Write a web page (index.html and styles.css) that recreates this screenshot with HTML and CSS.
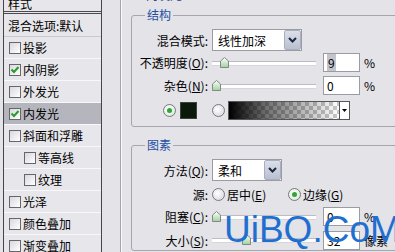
FILE: index.html
```html
<!DOCTYPE html>
<html lang="zh-CN">
<head>
  <meta charset="UTF-8">
  <meta name="viewport" content="width=device-width, initial-scale=1.0">
  <title>图层样式 - 内发光</title>
  <link rel="stylesheet" href="styles.css">
</head>
<body>

  <div class="dialog">
    <!-- 左侧样式列表 -->
    <div class="style-list">
      <div class="list-head">样式</div>
      <div class="list-item blend">混合选项:默认</div>
      <div class="list-item"><span class="check"></span>投影</div>
      <div class="list-item"><span class="check on"><svg width="10" height="10" viewBox="0 0 10 10"><path d="M1.5 4.5L4 7L8.5 2" fill="none" stroke="#249b2a" stroke-width="2"/></svg></span>内阴影</div>
      <div class="list-item"><span class="check"></span>外发光</div>
      <div class="list-item selected"><span class="check on"><svg width="10" height="10" viewBox="0 0 10 10"><path d="M1.5 4.5L4 7L8.5 2" fill="none" stroke="#249b2a" stroke-width="2"/></svg></span>内发光</div>
      <div class="list-item"><span class="check"></span>斜面和浮雕</div>
      <div class="list-item sub"><span class="check"></span>等高线</div>
      <div class="list-item sub"><span class="check"></span>纹理</div>
      <div class="list-item"><span class="check"></span>光泽</div>
      <div class="list-item"><span class="check"></span>颜色叠加</div>
      <div class="list-item"><span class="check"></span>渐变叠加</div>
    </div>

    <!-- 右侧设置 -->
    <div class="panel">
      <div class="panel-title">内发光</div>

      <fieldset class="group">
        <legend>结构</legend>
        <div class="group-body body-structure">
          <div class="row row-mode">
            <span class="row-label">混合模式:</span>
            <div class="select select-mode">
              <span class="select-text">线性加深</span>
              <span class="select-btn"><svg width="9" height="6" viewBox="0 0 9 6"><path d="M1 1L4.5 4.5L8 1" fill="none" stroke="#1c2740" stroke-width="2"/></svg></span>
            </div>
          </div>
          <div class="row row-opacity">
            <span class="row-label">不透明度(<u>O</u>):</span>
            <div class="slider">
              <svg class="thumb" style="left: 8px" width="9" height="11" viewBox="0 0 9 11"><defs><linearGradient id="tg" x1="0" y1="0" x2="0" y2="1"><stop offset="0" stop-color="#ffffff"/><stop offset="1" stop-color="#9fd29a"/></linearGradient></defs><path d="M0.5 4L4.5 0.5L8.5 4V10.5H0.5Z" fill="url(#tg)" stroke="#85858c"/></svg>
            </div>
            <span class="num"><span class="num-sel">9</span></span>
            <span class="unit">%</span>
          </div>
          <div class="row row-noise">
            <span class="row-label">杂色(<u>N</u>):</span>
            <div class="slider">
              <svg class="thumb" style="left: 0px" width="9" height="11" viewBox="0 0 9 11"><path d="M0.5 4L4.5 0.5L8.5 4V10.5H0.5Z" fill="url(#tg)" stroke="#85858c"/></svg>
            </div>
            <span class="num">0</span>
            <span class="unit">%</span>
          </div>
          <div class="row row-color">
            <span class="radio on"></span>
            <span class="swatch"></span>
            <span class="radio radio-grad"></span>
            <div class="gradient-box">
              <span class="gradient-fill"></span>
              <span class="gradient-btn"><svg width="5" height="3" viewBox="0 0 5 3"><path d="M0 0H5L2.5 3Z" fill="#000"/></svg></span>
            </div>
          </div>
        </div>
      </fieldset>

      <fieldset class="group group-elements">
        <legend>图素</legend>
        <div class="group-body body-elements">
          <div class="row row-method">
            <span class="row-label">方法(<u>Q</u>):</span>
            <div class="select select-method">
              <span class="select-text">柔和</span>
              <span class="select-btn"><svg width="9" height="6" viewBox="0 0 9 6"><path d="M1 1L4.5 4.5L8 1" fill="none" stroke="#1c2740" stroke-width="2"/></svg></span>
            </div>
          </div>
          <div class="row row-source">
            <span class="row-label">源:</span>
            <span class="option option-center"><span class="radio"></span>居中(<u>E</u>)</span>
            <span class="option"><span class="radio on"></span>边缘(<u>G</u>)</span>
          </div>
          <div class="row row-choke">
            <span class="row-label">阻塞(<u>C</u>):</span>
            <div class="slider">
              <svg class="thumb" style="left: 0px" width="9" height="11" viewBox="0 0 9 11"><path d="M0.5 4L4.5 0.5L8.5 4V10.5H0.5Z" fill="url(#tg)" stroke="#85858c"/></svg>
            </div>
            <span class="num">0</span>
            <span class="unit">%</span>
          </div>
          <div class="row row-size">
            <span class="row-label">大小(<u>S</u>):</span>
            <div class="slider">
              <svg class="thumb" style="left: 30px" width="9" height="11" viewBox="0 0 9 11"><path d="M0.5 4L4.5 0.5L8.5 4V10.5H0.5Z" fill="url(#tg)" stroke="#85858c"/></svg>
            </div>
            <span class="num">32</span>
            <span class="unit">像素</span>
          </div>
        </div>
      </fieldset>
    </div>

    <div class="watermark">UiBQ.CoM</div>
  </div>

</body>
</html>
```

FILE: styles.css
```css
* {
  box-sizing: border-box;
  margin: 0;
  padding: 0;
}

html, body {
  overflow: hidden;
}

body {
  width: 395px;
  height: 252px;
  background: #e3e3e8;
  font-family: "Noto Sans CJK SC", "Noto Sans", sans-serif;
  font-size: 12px;
  color: #000;
}

.dialog {
  position: relative;
  display: flex;
  height: 252px;
}

/* 样式列表 */
.style-list {
  align-self: flex-start;
  width: 99px;
  margin-left: 3px;
  margin-top: -6px;
  background: #e7e7eb;
  border-left: 1px solid #45454b;
  border-right: 1px solid #45454b;
}

.list-head {
  height: 20px;
  line-height: 20px;
  padding-left: 4px;
  border-bottom: 3px double #4a4a50;
}

.list-item {
  display: flex;
  align-items: center;
  height: 22px;
  padding-left: 5px;
  border-bottom: 1px solid #f8f8fa;
  white-space: nowrap;
}

.list-item.blend {
  height: 23px;
  padding-left: 4px;
  border-bottom-color: #c9c9ce;
}

.list-item.sub {
  padding-left: 20px;
}

.list-item.selected {
  background: #b5b5be;
}

.check {
  display: flex;
  align-items: center;
  justify-content: center;
  width: 12px;
  height: 12px;
  margin-right: 2px;
  border: 1px solid #66666c;
  background: linear-gradient(135deg, #d8d8de, #ffffff);
}

/* 右侧面板 */
.panel {
  flex: 1;
  margin-left: 18px;
  padding-left: 10px;
  border-left: 1px solid #a3a3a9;
  box-shadow: inset 1px 0 #fbfbfc;
}

.panel-title {
  height: 13px;
  margin-top: -11px;
  margin-left: 15px;
  line-height: 12px;
  color: #24407e;
}

.group {
  min-width: 0;
  margin-top: 6px;
  margin-right: -20px;
  padding: 0;
  border: 1px solid #a6a6ac;
  border-radius: 3px;
}

.group legend {
  margin-left: 13px;
  padding: 0 2px;
  line-height: 14px;
  color: #1f4fa3;
}

.group-elements {
  margin-top: 11px;
}

.body-structure {
  padding: 7px 0 6px;
}

.body-elements {
  padding: 7px 0 0;
}

.row {
  display: flex;
  align-items: center;
  white-space: nowrap;
}

.row-label {
  width: 76px;
  margin-right: 4px;
  text-align: right;
}

.row-mode, .row-method { height: 22px; }
.row-opacity { height: 21px; margin-top: 1px; }
.row-noise { height: 21px; margin-top: 2px; }
.row-color { height: 19px; margin-top: 5px; padding-left: 31px; }
.row-source { height: 20px; margin-top: 3px; }
.row-choke { height: 19px; margin-top: 3px; }
.row-size { height: 20px; margin-top: 4px; }

/* 下拉框 */
.select {
  display: flex;
  align-items: center;
  height: 22px;
  padding-left: 5px;
  background: #fff;
  border: 1px solid #9b9ba3;
}

.select-mode { width: 90px; }
.select-method { width: 70px; }

.select-btn {
  display: flex;
  align-items: center;
  justify-content: center;
  width: 17px;
  height: 20px;
  margin-left: auto;
  background: linear-gradient(#dcdfe9, #b9bfd0);
  border: 1px solid #a9afc2;
  border-radius: 2px;
}

/* 滑块 */
.slider {
  position: relative;
  width: 104px;
  height: 12px;
}

.slider::before {
  content: "";
  position: absolute;
  left: 0;
  right: 0;
  top: 4px;
  height: 3px;
  background: #fff;
  border-top: 1px solid #bcbcc2;
  border-bottom: 1px solid #d6d6dc;
}

.thumb {
  position: absolute;
  top: 0;
}

.num {
  width: 37px;
  height: 19px;
  margin-left: 7px;
  padding-left: 3px;
  line-height: 17px;
  background: #fff;
  border: 1px solid #9b9ba3;
}

.num-sel {
  background: #c4c4cc;
  padding: 0 1px;
}

.unit {
  margin-left: 4px;
}

/* 单选 / 颜色 */
.radio {
  display: flex;
  align-items: center;
  justify-content: center;
  width: 13px;
  height: 13px;
  border-radius: 50%;
  border: 1px solid #77777e;
  background: radial-gradient(circle at 40% 40%, #ffffff, #d3d3da);
}

.radio.on {
  background: radial-gradient(circle at 40% 40%, #ffffff, #cfe8cf);
}

.radio.on::after {
  content: "";
  width: 5px;
  height: 5px;
  border-radius: 50%;
  background: #33a33a;
}

.swatch {
  width: 17px;
  height: 17px;
  margin-left: 4px;
  background: #0b190b;
  border: 1px solid #3a443a;
}

.radio-grad {
  margin-left: 15px;
}

.gradient-box {
  display: flex;
  width: 122px;
  height: 19px;
  margin-left: 3px;
  border: 1px solid #55555b;
  background: #fff;
}

.gradient-fill {
  flex: 1;
  background:
    linear-gradient(to right, #000 0%, rgba(0, 0, 0, 0.55) 35%, rgba(0, 0, 0, 0) 100%),
    conic-gradient(#c8c8c8 25%, #fff 0 50%, #c8c8c8 0 75%, #fff 0) 0 0 / 8px 8px;
}

.gradient-btn {
  display: flex;
  align-items: center;
  justify-content: center;
  width: 10px;
  border-left: 1px solid #55555b;
}

.option {
  display: flex;
  align-items: center;
}

.option .radio {
  margin-right: 2px;
}

.option-center {
  width: 76px;
}

/* 水印 */
.watermark {
  position: absolute;
  left: 224px;
  top: 211px;
  font-family: "Liberation Sans", Arial, sans-serif;
  font-size: 37px;
  line-height: 37px;
  color: #1f6fd0;
  white-space: nowrap;
}
```
